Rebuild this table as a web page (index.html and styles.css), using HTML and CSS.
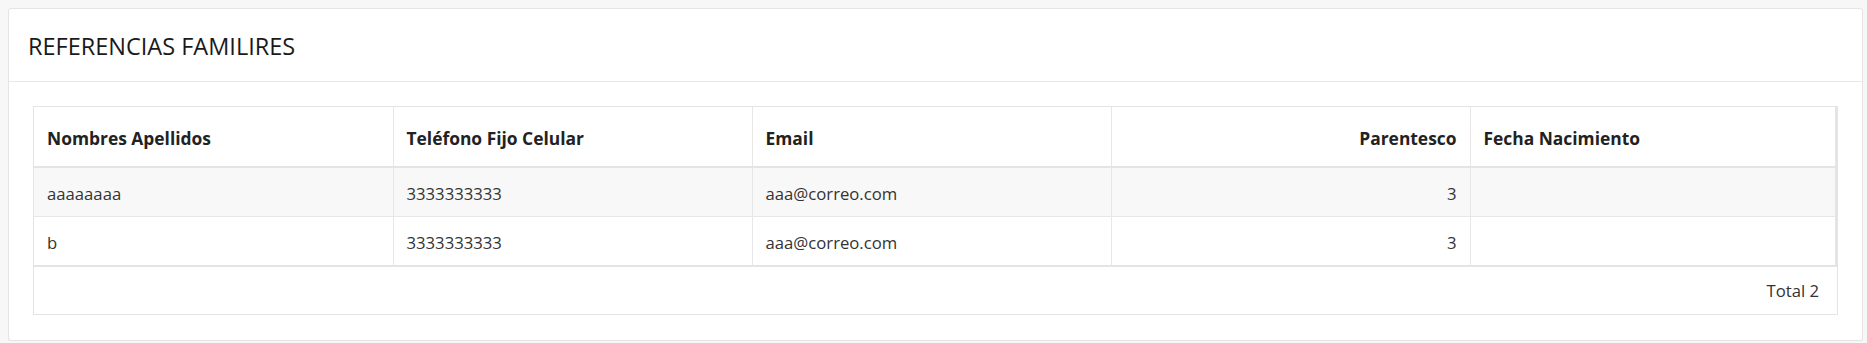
FILE: index.html
```html
<!DOCTYPE html>
<html lang="es">

<head>
  <meta charset="UTF-8">
  <meta name="viewport" content="width=device-width, initial-scale=1.0">
  <title>Referencias familiares</title>
  <link rel="stylesheet" href="styles.css">
</head>

<body>
  <div class="panel">
    <div class="panel-heading">
      <h2 class="panel-title">REFERENCIAS FAMILIRES</h2>
    </div>

    <div class="panel-body">
      <div class="grid">
        <table class="grid-table">
          <colgroup>
            <col class="col">
            <col class="col">
            <col class="col">
            <col class="col">
            <col>
          </colgroup>
          <thead>
            <tr>
              <th>Nombres Apellidos</th>
              <th>Teléfono Fijo Celular</th>
              <th>Email</th>
              <th class="num">Parentesco</th>
              <th>Fecha Nacimiento</th>
            </tr>
          </thead>
          <tbody>
            <tr>
              <td>aaaaaaaa</td>
              <td>3333333333</td>
              <td>aaa@correo.com</td>
              <td class="num">3</td>
              <td></td>
            </tr>
            <tr>
              <td>b</td>
              <td>3333333333</td>
              <td>aaa@correo.com</td>
              <td class="num">3</td>
              <td></td>
            </tr>
          </tbody>
        </table>
        <div class="grid-footer">Total 2</div>
      </div>
    </div>
  </div>
</body>

</html>
```

FILE: styles.css
```css
body {
  margin: 8px 4px 4px 8px;
  background: #f7f7f7;
  font-family: "Open Sans", "Noto Sans", sans-serif;
  font-size: 16.7px;
  color: #333;
}

.panel {
  background: #fff;
  border: 1px solid #e4e4e4;
  border-radius: 3px;
  box-shadow: 0 1px 2px rgba(0, 0, 0, 0.06);
}

.panel-heading {
  height: 72px;
  display: flex;
  align-items: center;
  padding: 0 19px;
  border-bottom: 1px solid #e8e8e8;
}

.panel-title {
  margin: 2px 0 0;
  font-size: 23.5px;
  font-weight: 400;
  color: #1a1a1a;
}

.panel-body {
  padding: 24px 24px 25px;
}

.grid {
  border: 1px solid #e4e4e4;
}

.grid-table {
  width: 100%;
  border-collapse: collapse;
  table-layout: fixed;
  border-right: 2px solid #e4e4e4;
}

.grid-table .col {
  width: 359px;
}

.grid-table th,
.grid-table td {
  text-align: left;
  border-right: 1px solid #e7e7e7;
  border-bottom: 1px solid #e7e7e7;
  line-height: 24px;
}

.grid-table th {
  padding: 19px 13px 16px;
  font-size: 17.4px;
  font-weight: 700;
  color: #222;
  border-bottom: 2px solid #e4e4e4;
}

.grid-table td {
  height: 24px;
  padding: 14px 13px 10px;
}

.grid-table tbody tr:nth-child(odd) {
  background: #f8f8f8;
}

.grid-table tbody tr:last-child td {
  border-bottom: 2px solid #e4e4e4;
}

.grid-table .num {
  text-align: right;
}

.grid-footer {
  height: 47px;
  display: flex;
  align-items: center;
  justify-content: flex-end;
  padding-right: 18px;
  color: #333;
}
```
